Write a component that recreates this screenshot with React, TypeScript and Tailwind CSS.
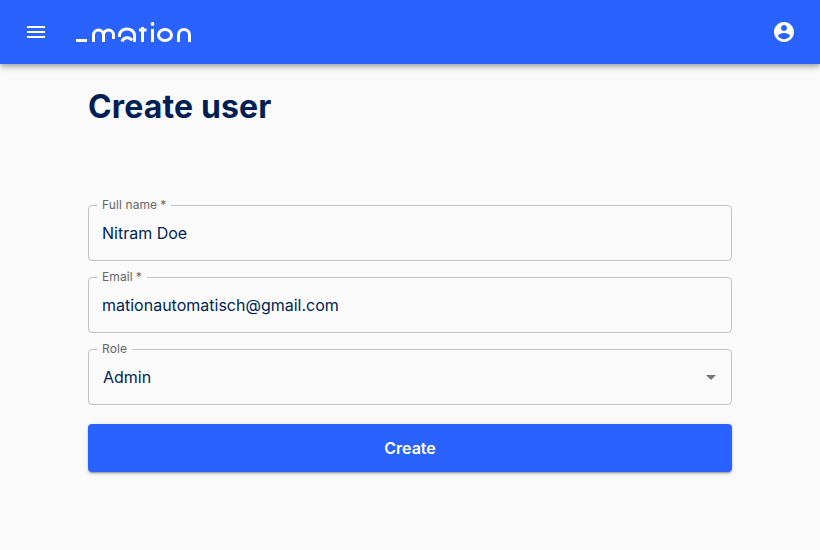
const inter = "font-['Inter',sans-serif]"

const Field = ({ label, required, children }: { label: string; required?: boolean; children: React.ReactNode }) => (
  <div className="relative flex h-14 items-center justify-between rounded border border-[#c4c4c4] pl-[13px] pr-[14px] text-base text-[#001f54]">
    {/* Notched label */}
    <span className="absolute -top-[8px] left-2 bg-[#fafafa] px-[5px] text-xs leading-[14px] tracking-[0.1px] text-[#666666]">
      {label}
      {required && <span className="ml-[3px]">*</span>}
    </span>
    {children}
  </div>
)

export default function App() {
  return (
    <div className={`${inter} min-h-[550px] bg-[#fafafa]`}>
      {/* App bar */}
      <header className="flex h-16 items-center justify-between bg-[#2962ff] px-6 shadow-[0_2px_4px_-1px_rgba(0,0,0,0.2),0_4px_5px_0_rgba(0,0,0,0.14),0_1px_10px_0_rgba(0,0,0,0.12)]">
        <div className="flex items-center gap-[28px]">
          <svg width="24" height="24" viewBox="0 0 24 24" fill="white">
            <path d="M3 18h18v-2H3v2zm0-5h18v-2H3v2zm0-7v2h18V6H3z" />
          </svg>
          <svg width="116" height="24" viewBox="0 0 116 24" fill="none" stroke="white" strokeWidth="3">
            <path d="M0 20.5h11" />
            <path d="M17.5 22v-7a5 5 0 0 1 10 0v7M27.5 15a5 5 0 0 1 10 0v4" />
            <path d="M58.5 22v-7a7.5 6 0 0 0-15 0v2M46 21.5a5.5 5.5 0 0 1 10-1" />
            <path d="M66.5 7v15M63 10h7.5" />
            <path d="M76.5 9v13" />
            <circle cx="76.5" cy="4" r="1.9" fill="white" stroke="none" />
            <ellipse cx="89" cy="15" rx="6.5" ry="5.5" />
            <path d="M102.5 22v-7a5.5 5.5 0 0 1 11 0v7" />
          </svg>
        </div>
        <svg width="24" height="24" viewBox="0 0 24 24" fill="white">
          <path d="M12 2C6.48 2 2 6.48 2 12s4.48 10 10 10 10-4.48 10-10S17.52 2 12 2zm0 3c1.66 0 3 1.34 3 3s-1.34 3-3 3-3-1.34-3-3 1.34-3 3-3zm0 14.2c-2.5 0-4.71-1.28-6-3.22.03-1.99 4-3.08 6-3.08 1.99 0 5.97 1.09 6 3.08-1.29 1.94-3.5 3.22-6 3.22z" />
        </svg>
      </header>

      <main className="px-[88px]">
        <h1 className="pt-[23px] text-[32px] font-bold leading-10 tracking-[0.15px] text-[#001f54]">Create user</h1>

        <form className="mt-[78px] flex flex-col gap-4">
          <Field label="Full name" required>
            <span>Nitram Doe</span>
          </Field>
          <Field label="Email" required>
            <span>mationautomatisch@gmail.com</span>
          </Field>
          <Field label="Role">
            <span className="pl-px">Admin</span>
            <svg width="24" height="24" viewBox="0 0 24 24" fill="#757575" className="-mr-[6px]">
              <path d="M7 10l5 5 5-5z" />
            </svg>
          </Field>
          <button
            type="button"
            className="mt-[3px] h-12 rounded bg-[#2962ff] text-base font-semibold text-white shadow-[0_3px_1px_-2px_rgba(0,0,0,0.2),0_2px_2px_0_rgba(0,0,0,0.14),0_1px_5px_0_rgba(0,0,0,0.12)]"
          >
            Create
          </button>
        </form>
      </main>
    </div>
  )
}
